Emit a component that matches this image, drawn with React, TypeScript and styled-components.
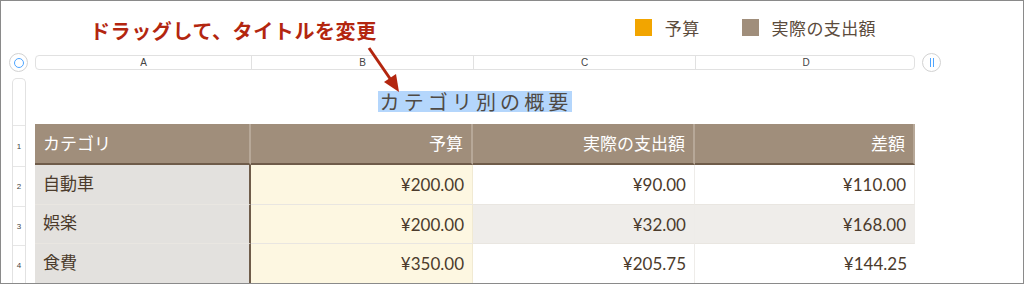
import styled, { createGlobalStyle } from "styled-components";

const GlobalStyle = createGlobalStyle`
  html, body {
    margin: 0;
    padding: 0;
    background: #fff;
  }
  body {
    font-family: "Lato", "Noto Sans CJK JP", sans-serif;
  }
`;

const Frame = styled.div`
  position: relative;
  width: 1024px;
  height: 284px;
  box-sizing: border-box;
  border: 1px solid #8a8a8a;
  overflow: hidden;
  background: #fff;
`;

const TopBar = styled.div`
  display: flex;
  align-items: center;
  height: 54px;
`;

const Annotation = styled.div`
  margin-left: 89px;
  margin-top: 4px;
  font-family: "Noto Sans CJK JP", sans-serif;
  font-weight: 700;
  font-size: 20px;
  letter-spacing: 0.6px;
  color: #b3260f;
`;

const Legend = styled.div`
  display: flex;
  align-items: center;
  gap: 42px;
  margin-left: auto;
  margin-right: 147px;
  margin-bottom: 1px;
`;

const LegendItem = styled.div`
  display: flex;
  align-items: center;
  gap: 13px;
  font-family: "Noto Sans CJK JP", sans-serif;
  font-size: 17px;
  letter-spacing: 0.4px;
  color: #5b4b3c;
`;

const Swatch = styled.span<{ $color: string }>`
  width: 17px;
  height: 17px;
  background: ${(p) => p.$color};
`;

const ColumnBarRow = styled.div`
  display: flex;
  align-items: center;
  gap: 7px;
  height: 15px;
  padding-left: 8px;
`;

const Handle = styled.div`
  width: 19px;
  height: 19px;
  box-sizing: border-box;
  border: 1.5px solid #d2d2d2;
  border-radius: 50%;
  display: flex;
  align-items: center;
  justify-content: center;
  background: #fff;
`;

const Ring = styled.span`
  width: 10px;
  height: 10px;
  box-sizing: border-box;
  border: 1.5px solid #4ea5ff;
  border-radius: 50%;
`;

const Bars = styled.span`
  width: 4px;
  height: 9px;
  border-left: 1.5px solid #4ea5ff;
  border-right: 1.5px solid #4ea5ff;
  box-sizing: border-box;
`;

const ColumnBar = styled.div`
  display: grid;
  grid-template-columns: 216px 222px 222px 220px;
  width: 880px;
  height: 15px;
  box-sizing: border-box;
  border: 1.5px solid #e1e1e1;
  border-radius: 4px;
`;

const ColumnLetter = styled.div<{ $last?: boolean }>`
  display: flex;
  align-items: center;
  justify-content: center;
  font-family: "Liberation Sans", Arial, sans-serif;
  font-size: 10px;
  color: #444;
  border-right: ${(p) => (p.$last ? "none" : "1px solid #e1e1e1")};
`;

const Body = styled.div`
  display: flex;
  align-items: flex-start;
  gap: 9px;
  padding-left: 11px;
`;

const RowHeaders = styled.div`
  margin-top: 8px;
  width: 14px;
  box-sizing: border-box;
  border: 1px solid #e2e2e2;
  border-bottom: none;
  border-radius: 5px 5px 0 0;
`;

const RowNumber = styled.div<{ $h: number }>`
  height: ${(p) => p.$h}px;
  box-sizing: border-box;
  border-top: 1px solid #e6e6e6;
  display: flex;
  align-items: center;
  justify-content: center;
  font-family: "Liberation Sans", Arial, sans-serif;
  font-size: 8px;
  color: #444;
  &:first-child {
    border-top: none;
  }
`;

const Content = styled.div`
  width: 880px;
`;

const TitleArea = styled.div`
  height: 54px;
  box-sizing: border-box;
  padding-top: 21px;
  display: flex;
  justify-content: center;
`;

const Title = styled.span`
  display: inline-block;
  height: 21px;
  line-height: 21px;
  padding-left: 2px;
  font-family: "Noto Sans CJK JP", sans-serif;
  font-size: 20px;
  letter-spacing: 4.1px;
  color: #4f4a45;
  background: #b4d6fc;
`;

const Table = styled.div`
  display: grid;
  grid-template-columns: 216px 222px 222px 220px;
  grid-template-rows: 41px 40px 39px 40px;
`;

type Kind = "head" | "cat" | "budget" | "plain";

const Cell = styled.div<{ $kind: Kind; $stripe?: boolean; $left?: boolean }>`
  display: flex;
  align-items: center;
  justify-content: ${(p) => (p.$left ? "flex-start" : "flex-end")};
  box-sizing: border-box;
  padding: 0 8px ${(p) => (p.$kind === "head" ? 3 : p.$left ? 5 : 0)}px 8px;
  font-family: "Lato", "Noto Sans CJK JP", sans-serif;
  font-size: 17px;
  color: ${(p) => (p.$kind === "head" ? "#fff" : "#4b3b2c")};
  background: ${(p) =>
    p.$kind === "head"
      ? "#a08e7b"
      : p.$kind === "cat"
      ? "#e3e1de"
      : p.$kind === "budget"
      ? "#fdf7e1"
      : p.$stripe
      ? "#efedea"
      : "#fff"};
  border-bottom: ${(p) => (p.$kind === "head" ? "2px solid #6f5c4a" : "1px solid #e9e6e1")};
  border-right: ${(p) =>
    p.$kind === "head"
      ? "2px solid #b7a898"
      : p.$kind === "cat"
      ? "2px solid #6f5c4a"
      : p.$kind === "budget"
      ? "1px solid #f1ead3"
      : "1px solid #eeece9"};
  &:last-child {
    border-right: none;
  }
`;

const ArrowSvg = styled.svg`
  position: absolute;
  left: 360px;
  top: 40px;
  width: 50px;
  height: 60px;
`;

const headers = ["カテゴリ", "予算", "実際の支出額", "差額"];

const rows = [
  { name: "自動車", budget: "¥200.00", actual: "¥90.00", diff: "¥110.00" },
  { name: "娯楽", budget: "¥200.00", actual: "¥32.00", diff: "¥168.00" },
  { name: "食費", budget: "¥350.00", actual: "¥205.75", diff: "¥144.25" },
];

const rowHeights = [46, 41, 40, 39, 40];

export default function App() {
  return (
    <>
      <GlobalStyle />
      <Frame>
        <TopBar>
          <Annotation>ドラッグして、タイトルを変更</Annotation>
          <Legend>
            <LegendItem>
              <Swatch $color="#f2a500" />
              予算
            </LegendItem>
            <LegendItem>
              <Swatch $color="#a08e7b" />
              実際の支出額
            </LegendItem>
          </Legend>
        </TopBar>

        <ColumnBarRow>
          <Handle>
            <Ring />
          </Handle>
          <ColumnBar>
            {["A", "B", "C", "D"].map((l, i) => (
              <ColumnLetter key={l} $last={i === 3}>
                {l}
              </ColumnLetter>
            ))}
          </ColumnBar>
          <Handle>
            <Bars />
          </Handle>
        </ColumnBarRow>

        <Body>
          <RowHeaders>
            {rowHeights.map((h, i) => (
              <RowNumber key={i} $h={h}>
                {i === 0 ? "" : i}
              </RowNumber>
            ))}
          </RowHeaders>
          <Content>
            <TitleArea>
              <Title>カテゴリ別の概要</Title>
            </TitleArea>
            <Table>
              {headers.map((h, i) => (
                <Cell key={h} $kind="head" $left={i === 0}>
                  {h}
                </Cell>
              ))}
              {rows.map((r, i) => [
                <Cell key={r.name + "n"} $kind="cat" $left>
                  {r.name}
                </Cell>,
                <Cell key={r.name + "b"} $kind="budget">
                  {r.budget}
                </Cell>,
                <Cell key={r.name + "a"} $kind="plain" $stripe={i === 1}>
                  {r.actual}
                </Cell>,
                <Cell key={r.name + "d"} $kind="plain" $stripe={i === 1}>
                  {r.diff}
                </Cell>,
              ])}
            </Table>
          </Content>
        </Body>

        <ArrowSvg viewBox="0 0 50 60">
          <line x1="8" y1="7" x2="30" y2="39" stroke="#b3260f" strokeWidth="3" />
          <polygon points="38,51 23,41 35,33" fill="#b3260f" />
        </ArrowSvg>
      </Frame>
    </>
  );
}
